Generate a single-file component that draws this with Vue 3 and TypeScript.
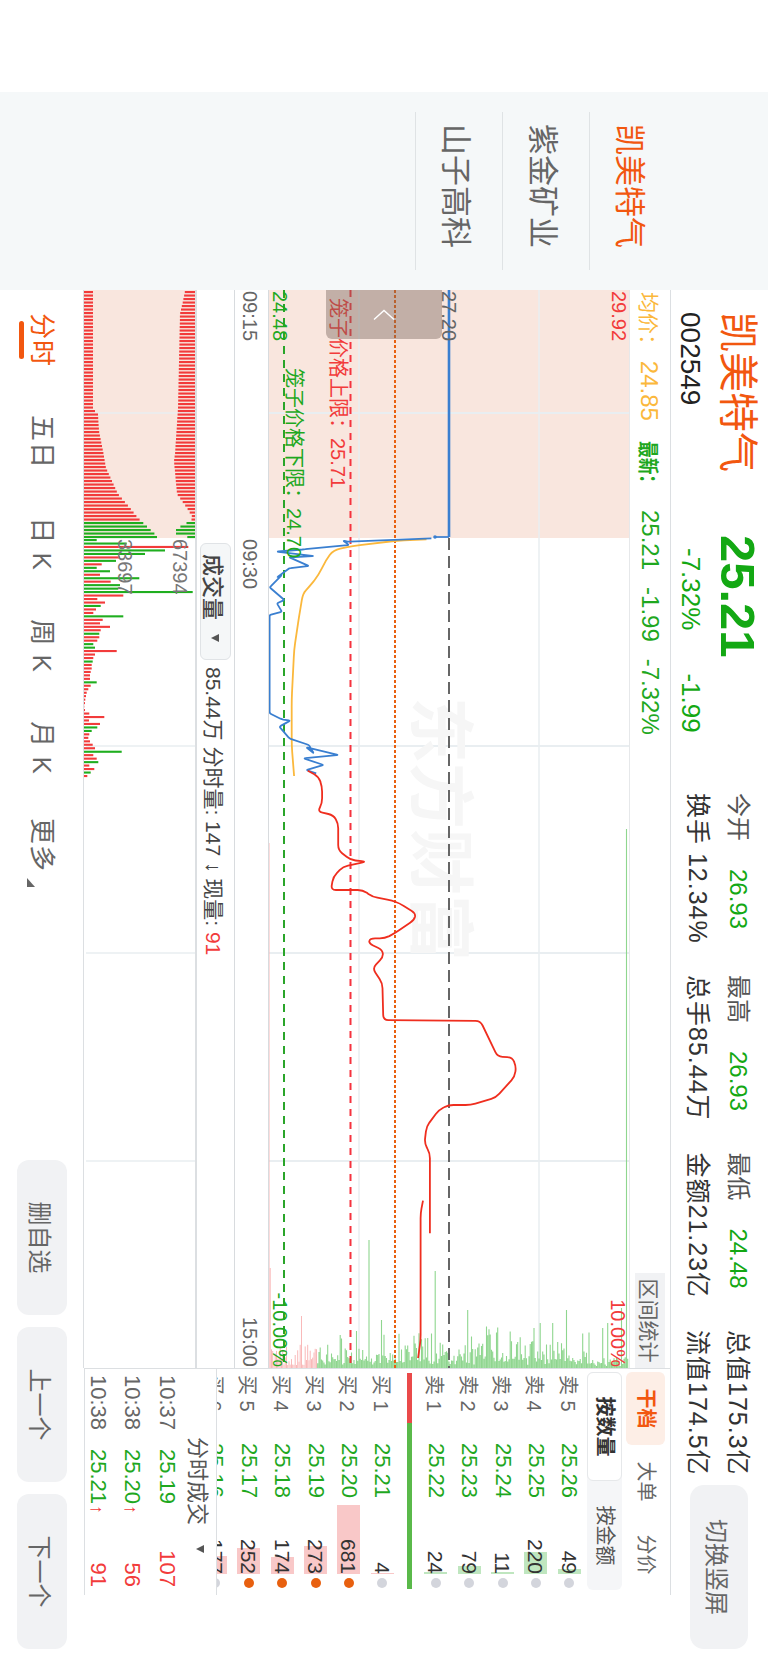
<script setup lang="ts">
type P = [number, number]
const CL = 290 // screen y of chart start
const CT = 629 // screen x of chart top
const toChart = (p: P): P => [p[1] - CL, CT - p[0]]
const z2 = (a: number[]): P[] => {
  const o: P[] = []
  for (let i = 0; i < a.length; i += 2) o.push([a[i] / 2.04, 500 + a[i + 1] / 3])
  return o
}
const z3 = (a: number[]): P[] => {
  const o: P[] = []
  for (let i = 0; i < a.length; i += 2) o.push([a[i] / 2.04, 860 + a[i + 1] / 3])
  return o
}
// polyline with softened corners
const rounded = (pts: P[], radius: number): string => {
  const c = pts.map(toChart)
  let d = `M${c[0][0].toFixed(1)} ${c[0][1].toFixed(1)}`
  for (let i = 1; i < c.length - 1; i++) {
    const [px, py] = c[i - 1]
    const [x, y] = c[i]
    const [nx, ny] = c[i + 1]
    const l1 = Math.hypot(x - px, y - py) || 1
    const l2 = Math.hypot(nx - x, ny - y) || 1
    const r1 = Math.min(radius, l1 / 2)
    const r2 = Math.min(radius, l2 / 2)
    const ax = x - ((x - px) / l1) * r1
    const ay = y - ((y - py) / l1) * r1
    const bx = x + ((nx - x) / l2) * r2
    const by = y + ((ny - y) / l2) * r2
    d += `L${ax.toFixed(1)} ${ay.toFixed(1)}Q${x.toFixed(1)} ${y.toFixed(1)} ${bx.toFixed(1)} ${by.toFixed(1)}`
  }
  const e = c[c.length - 1]
  return d + `L${e[0].toFixed(1)} ${e[1].toFixed(1)}`
}

const blue = rounded(z2([880, 115, 710, 125, 700, 122, 712, 135, 620, 148, 565, 155, 640, 168, 590, 172, 630, 198, 590, 205, 565, 232, 575, 225, 550, 262, 580, 300, 565, 310, 575, 335, 550, 345, 550, 500, 550, 640, 575, 658, 592, 662, 570, 680, 590, 715, 630, 735, 640, 760, 625, 742, 690, 765, 620, 775, 660, 795, 625, 810, 645, 820]), 1.5)
const avg = rounded(z2([870, 118, 810, 122, 720, 138, 680, 150, 665, 180, 650, 225, 630, 262, 618, 280, 610, 350, 600, 450, 595, 600, 595, 735, 600, 828]), 7)
const red = rounded([
  ...z2([628, 812, 650, 830, 657, 860, 657, 910, 648, 935, 680, 945, 690, 970, 690, 1050, 715, 1080]),
  ...z3([748, 5, 700, 20, 680, 50, 675, 90, 740, 90, 760, 110, 800, 122, 815, 130, 848, 160, 845, 180, 805, 220, 785, 235, 755, 235, 752, 250, 780, 270, 782, 290, 760, 325, 780, 370, 782, 480, 980, 483, 1015, 590, 1045, 592, 1053, 620, 1050, 650, 1012, 712, 960, 735, 915, 735, 895, 750, 870, 800, 866, 850, 877, 880, 877, 1120])
], 5)
const red2 = rounded([[863 / 2.04, 860 + 1022 / 3], [858 / 2.04, 860 + 1060 / 3], [858 / 2.04, 1340], [853 / 2.04, 1358]], 5)

// price-volume histogram, anchored at the right edge of the chart
let seed = 17
const rnd = () => {
  seed = (seed * 16807) % 2147483647
  return seed / 2147483647
}
const spikes: Record<number, number> = {
  269: 525, 270: 100, 302: 52, 336: 71, 326: 35, 356: 46, 369: 128, 382: 48,
  435: 97, 428: 30, 468: 58, 501: 105, 567: 58, 540: 45, 534: 40,
  553: 45, 546: 35, 603: 40, 608: 45, 626: 112, 627: 539, 622: 60
}
let greenD = ''
let pinkD = ''
for (let x = 269; x < 628; x += 1.25) {
  const r = rnd()
  const base = x < 317 ? 3 + r * r * 22 : x > 590 ? 1 + r * 10 : 3 + r * r * r * 32 + rnd() * 7
  const px = Math.round(x)
  const h = spikes[px] ?? base
  const seg = `M${(1078 - h).toFixed(1)} ${(CT - x).toFixed(1)}H1078`
  if (x < 317) pinkD += seg
  else greenD += seg
}

// volume bars
const lerp = (t: number[][], y: number) => {
  for (let i = 0; i < t.length - 1; i++) {
    if (y <= t[i + 1][0]) {
      const k = (y - t[i][0]) / (t[i + 1][0] - t[i][0])
      return t[i][1] + (t[i + 1][1] - t[i][1]) * k
    }
  }
  return t[t.length - 1][1]
}
const leftT = [[290, 9], [408, 9], [413, 14], [430, 15], [450, 19], [467, 22], [493, 34], [507, 46], [517, 54], [535, 73], [538, 73]]
const rightT = [[290, 10], [300, 12], [313, 15], [407, 17], [453, 20], [460, 21], [493, 18], [507, 8], [517, 2], [520, 5], [528, 19], [534, 19], [537, 2]]
const rgb = { R: '#f23b3b', G: '#1fae1f' }
const volBars: { x: number; y: number; w: number; c: string }[] = []
for (let y = 291; y < 538; y += 3.5) {
  const c = y < 519 ? rgb.R : rgb.G
  const l = lerp(leftT, y)
  const r = lerp(rightT, y)
  volBars.push({ x: y - CL, y: 111 - l, w: l, c })
  volBars.push({ x: y - CL, y: 0, w: r, c })
}
const rows = 'G50 G140 R325 G255 G195 R120 G108 R65 G50 G90 R60 G178 R92 G120 G115 G338 R130 R52 R75 G62 R48 R40 G130 R68 R60 R90 R62 G58 R58 R52 G40 G45 R110 R45 R40 G38 R35 R35 R32 R30 R30 G50 R32 R25 R20 R18 R16 R15 R13 R15 R28 R73 R27 R60 G52 G35 R28 R25 R30 R38 R45 G125 R40 R50 G55 R28 R43 G32 R22 R12'.split(' ')
rows.forEach((s, i) => {
  const y = 539 + i * 3.47
  const l = (Number(s.slice(1)) - 12) / 3
  volBars.push({ x: y - CL, y: 111 - l, w: l, c: s[0] === 'R' ? rgb.R : rgb.G })
})

const navItems = ['分时', '五日', '日 K', '周 K', '月 K', '更多']
const asks = [
  { l: '卖 5', p: '25.26', q: 49, w: 5 },
  { l: '卖 4', p: '25.25', q: 220, w: 22 },
  { l: '卖 3', p: '25.24', q: 11, w: 2 },
  { l: '卖 2', p: '25.23', q: 79, w: 8 },
  { l: '卖 1', p: '25.22', q: 24, w: 2 }
]
const bids = [
  { l: '买 1', p: '25.21', q: 4, w: 1, on: false },
  { l: '买 2', p: '25.20', q: 681, w: 69, on: true },
  { l: '买 3', p: '25.19', q: 273, w: 28, on: true },
  { l: '买 4', p: '25.18', q: 174, w: 17, on: true },
  { l: '买 5', p: '25.17', q: 252, w: 26, on: true },
  { l: '买 6', p: '25.16', q: 177, w: 18, on: false }
]
const trades = [
  { t: '10:37', p: '25.19', up: false, q: 107 },
  { t: '10:38', p: '25.20', up: true, q: 56 },
  { t: '10:38', p: '25.21', up: true, q: 91 }
]
</script>

<template>
  <div class="screen">
    <div class="stage">
      <div class="notch"></div>

      <aside class="side">
        <div class="side-item on"><span>凯美特气</span></div>
        <div class="side-item"><span>紫金矿业</span></div>
        <div class="side-item"><span>山子高科</span></div>
      </aside>

      <main class="main">
        <header class="head">
          <div class="name-block">
            <div class="name">凯美特气</div>
            <div class="code">002549</div>
          </div>
          <div class="price-block">
            <div class="price">25.21</div>
            <div class="change"><span>-7.32%</span><span>-1.99</span></div>
          </div>
          <div class="stat s1">
            <div class="stat-top"><span class="k">今开</span><span class="v">26.93</span></div>
            <div class="stat-sub">换手 12.34%</div>
          </div>
          <div class="stat s2">
            <div class="stat-top"><span class="k">最高</span><span class="v">26.93</span></div>
            <div class="stat-sub">总手85.44万</div>
          </div>
          <div class="stat s3">
            <div class="stat-top"><span class="k">最低</span><span class="v">24.48</span></div>
            <div class="stat-sub">金额21.23亿</div>
          </div>
          <div class="stat s4">
            <div class="stat-top plain">总值175.3亿</div>
            <div class="stat-sub">流值174.5亿</div>
          </div>
          <button class="switch">切换竖屏</button>
        </header>

        <section class="body">
          <div class="chart-col">
            <div class="legend">
              <span class="avg">均价： <span class="legend-num">24.85</span></span>
              <span class="last"><b>最新：</b><span class="legend-num">25.21</span><span class="legend-num">-1.99</span><span class="legend-num">-7.32%</span></span>
              <button class="range">区间统计</button>
            </div>

            <div class="chart">
              <svg class="plot" width="1078" height="360" viewBox="0 0 1078 360">
                <rect x="0" y="0" width="248" height="360" fill="#f9e6de" />
                <g stroke="#e9eef1" fill="none">
                  <path d="M0 90H1078M0 270H1078" stroke-width="1.5" />
                  <path d="M123 0V360M456 0V360M663 0V360M871 0V360" stroke-width="2" />
                </g>
                <text class="mark" x="407" y="212">东方财富</text>
                <path :d="pinkD" stroke="#f9b9b9" stroke-width="1" fill="none" />
                <path :d="greenD" stroke="#8fd68f" stroke-width="1.1" fill="none" />
                <path d="M248 180H1078" stroke="#666" stroke-width="2" stroke-dasharray="12 6" fill="none" />
                <path d="M0 234H1078" stroke="#e8600f" stroke-width="2" stroke-dasharray="3 2" fill="none" />
                <path d="M0 278.500H1078" stroke="#f5333f" stroke-width="2" stroke-dasharray="7 6" fill="none" />
                <path d="M0 345H1078" stroke="#2aa52a" stroke-width="2" stroke-dasharray="8 6" fill="none" />
                <path d="M0 180H247" stroke="#3a7fd0" stroke-width="2.600" fill="none" />
                <path d="M247 180V194" stroke="#3a7fd0" stroke-width="1.700" fill="none" />
                <circle cx="247" cy="194" r="1.800" fill="#3a7fd0" />
                <path :d="avg" fill="none" stroke="#fbb83c" stroke-width="1.800" stroke-linejoin="round" />
                <path :d="blue" fill="none" stroke="#3a7fd0" stroke-width="1.800" stroke-linejoin="round" />
                <path :d="red" fill="none" stroke="#ef2e1f" stroke-width="1.800" stroke-linejoin="round" />
                <path :d="red2" fill="none" stroke="#ef2e1f" stroke-width="1.800" stroke-linejoin="round" />
              </svg>
              <span class="lbl lbl-hi">29.92</span>
              <span class="lbl lbl-mid">27.20</span>
              <span class="lbl lbl-lo">24.48</span>
              <span class="lbl lbl-pct-up">10.00%</span>
              <span class="lbl lbl-pct-dn">-10.00%</span>
              <span class="lbl lbl-cage-up">笼子价格上限：25.71</span>
              <span class="lbl lbl-cage-dn">笼子价格下限：24.70</span>
              <div class="handle">
                <svg width="12" height="22" viewBox="0 0 12 22"><path d="M10.500 1L1.500 11L10.500 21" stroke="#fff" stroke-width="1.400" fill="none" /></svg>
              </div>
            </div>

            <div class="times"><span>09:15</span><span class="t2">09:30</span><span class="t3">15:00</span></div>

            <div class="vol-info">
              <button class="vol-btn">成交量<i class="tri"></i></button>
              <span class="vol-text">85.44万 分时量: 147 ↓ 现量: <em>91</em></span>
            </div>

            <div class="vol">
              <svg class="plot" width="1078" height="111" viewBox="0 0 1078 111">
                <rect x="0" y="0" width="248" height="111" fill="#f9e6de" />
                <path d="M123 0V111M456 0V109M663 0V109M871 0V109" stroke="#e9eef1" stroke-width="1.500" fill="none" />
                <rect v-for="(b, i) in volBars" :key="i" :x="b.x.toFixed(1)" :y="b.y.toFixed(1)" width="2.100" :height="b.w.toFixed(1)" :fill="b.c" />
              </svg>
              <span class="vol-lbl v1">67394</span>
              <span class="vol-lbl v2">33697</span>
            </div>
          </div>

          <div class="panel">
            <div class="tabs">
              <span class="tab on">干档</span><span class="tab">大单</span><span class="tab">分价</span>
            </div>
            <div class="seg"><span class="seg-on">按数量</span><span class="seg-off">按金额</span></div>
            <div class="book">
              <div v-for="r in asks" :key="r.l" class="row">
                <span class="r-l">{{ r.l }}</span><span class="r-p">{{ r.p }}</span>
                <span class="r-q"><i class="bar ask" :style="{ width: r.w + 'px' }"></i><span class="q-t">{{ r.q }}</span></span>
                <i class="dot"></i>
              </div>
              <div class="split"><div class="split-line"><i></i></div></div>
              <div v-for="r in bids" :key="r.l" class="row">
                <span class="r-l">{{ r.l }}</span><span class="r-p">{{ r.p }}</span>
                <span class="r-q"><i class="bar bid" :style="{ width: r.w + 'px' }"></i><span class="q-t">{{ r.q }}</span></span>
                <i class="dot" :class="{ hot: r.on }"></i>
              </div>
            </div>
            <div class="trades">
              <div class="tr-head">分时成交<i class="tri"></i></div>
              <div v-for="t in trades" :key="t.t + t.q" class="tr-row">
                <span class="tr-t">{{ t.t }}</span>
                <span class="tr-p">{{ t.p }}<em v-if="t.up">↑</em></span>
                <span class="tr-q">{{ t.q }}</span>
              </div>
            </div>
          </div>
        </section>

        <footer class="foot">
          <nav class="nav">
            <span v-for="(n, i) in navItems" :key="n" class="nav-item" :class="{ on: i === 0, more: n === '更多' }">{{ n }}<i v-if="n === '更多'" class="corner"></i></span>
          </nav>
          <div class="actions">
            <button class="act">删自选</button>
            <button class="act">上一个</button>
            <button class="act">下一个</button>
          </div>
        </footer>
      </main>
    </div>
  </div>
</template>

<style>
html, body { margin: 0; padding: 0; background: #fff; }
</style>

<style scoped>
.screen {
  width: 768px;
  height: 1663px;
  overflow: hidden;
  position: relative;
  font-family: "Liberation Sans", "Noto Sans CJK SC", sans-serif;
  color: #333;
  background: #fff;
}
.stage {
  position: absolute;
  left: 768px;
  top: 0;
  width: 1663px;
  height: 768px;
  display: flex;
  transform: rotate(90deg);
  transform-origin: 0 0;
}
button { font-family: inherit; border: 0; padding: 0; }
i { font-style: normal; display: block; }
em { font-style: normal; }
.notch { width: 92px; flex: none; }
.side {
  width: 198px;
  flex: none;
  background: #f5f8f9;
  padding-top: 92px;
  box-sizing: border-box;
}
.side-item {
  height: 87px;
  margin: 0 20px;
  padding-right: 10px;
  border-bottom: 1px solid #dfe3e5;
  display: flex;
  align-items: center;
  justify-content: center;
  font-size: 31px;
  color: #666;
  box-sizing: border-box;
}
.side-item.on { color: #f2570f; }
.main { width: 1373px; flex: none; display: flex; flex-direction: column; }
.head { height: 98px; display: flex; padding-left: 22px; position: relative; box-sizing: border-box; flex: none; }
.head::after { content: ""; position: absolute; left: 0; bottom: 0; width: 1305px; height: 1px; background: #dcdfe2; }
.name-block { width: 223px; flex: none; }
.name { font-size: 40px; line-height: 60px; color: #f2570f; }
.code { font-size: 28px; line-height: 36px; color: #222; }
.price-block { width: 258px; flex: none; }
.price { font-size: 49px; line-height: 60px; font-weight: 700; color: #13a813; }
.change { display: flex; gap: 43px; padding-left: 13px; font-size: 26px; line-height: 34px; color: #13a813; }
.stat { flex: none; font-size: 24px; color: #333; }
.s1 { width: 182px; }
.s2, .s3 { width: 177.500px; }
.s4 { width: 155px; }
.stat-top { height: 60px; line-height: 60px; }
.stat-top.plain, .stat-sub { font-size: 25px; letter-spacing: 1px; }
.stat-sub { line-height: 20px; }
.k { color: #555; }
.v { color: #13a813; margin-left: 28px; }
.switch {
  width: 164px;
  height: 58px;
  margin-top: 20px;
  border-radius: 14px;
  background: #f1f2f4;
  color: #666;
  font-size: 24px;
  flex: none;
}
.body { height: 586px; display: flex; flex: none; }
.chart-col { width: 1078px; flex: none; display: flex; flex-direction: column; }
.legend {
  height: 41px;
  display: flex;
  align-items: center;
  font-size: 21px;
  padding-left: 2px;
  box-sizing: border-box;
  border-bottom: 1px solid #e6e8ea;
}
.avg { color: #fbb83c; width: 149px; flex: none; }
.legend-num { font-size: 24px; }
.last { color: #1fa81f; display: flex; align-items: center; gap: 17px; }
.last b { font-size: 21px; font-weight: 700; width: 52px; white-space: nowrap; transform: scaleX(0.8); transform-origin: 0 50%; }
.range {
  margin-left: auto;
  width: 95px;
  height: 30px;
  background: #f1f2f4;
  color: #666;
  font-size: 21px;
  white-space: nowrap;
}
.chart { height: 360px; position: relative; flex: none; }
.plot { display: block; }
.mark { font-size: 66px; font-weight: 700; fill: #f6f6f6; }
.lbl { position: absolute; font-size: 20px; line-height: 24px; white-space: nowrap; transform: translateY(-50%); }
.lbl-hi { left: 1px; top: 10px; color: #f23b3b; }
.lbl-mid { left: 1px; top: 180px; color: #666; }
.lbl-lo { left: 1px; top: 349px; color: #1fa81f; }
.lbl-pct-up { right: 1px; top: 11px; color: #f23b3b; }
.lbl-pct-dn { right: 1px; top: 349px; color: #1fa81f; }
.lbl-cage-up { left: 8px; top: 291px; color: #f23b3b; }
.lbl-cage-dn { left: 78px; top: 335px; color: #1fa81f; }
.handle {
  position: absolute;
  left: 0;
  top: 187px;
  width: 49px;
  height: 116px;
  background: rgba(120, 100, 90, 0.42);
  border-radius: 0 6px 6px 0;
  display: flex;
  align-items: center;
  justify-content: center;
}
.times {
  height: 35px;
  flex: none;
  display: flex;
  align-items: center;
  font-size: 20px;
  color: #666;
  border-top: 1px solid #d8dbde;
  border-bottom: 1px solid #d8dbde;
  box-sizing: border-box;
  padding: 3px 1px 0;
}
.t2 { margin-left: 198px; }
.t3 { margin-left: auto; }
.vol-info {
  height: 39px;
  flex: none;
  display: flex;
  align-items: center;
  border-bottom: 2px solid #dcdfe2;
  box-sizing: border-box;
}
.vol-btn {
  margin-left: 253px;
  width: 117px;
  height: 31px;
  background: #f5f7f8;
  border: 1px solid #e0e3e6;
  border-radius: 6px;
  color: #444;
  font-size: 22px;
  font-weight: 500;
  display: flex;
  align-items: center;
  padding-left: 10px;
  box-sizing: border-box;
  flex: none;
}
.tri {
  width: 0;
  height: 0;
  border-left: 4.500px solid transparent;
  border-right: 4.500px solid transparent;
  border-top: 8px solid #555;
  margin-left: 14px;
}
.vol-text { margin-left: 7px; font-size: 21px; color: #444; white-space: nowrap; }
.vol-text em { color: #f23b3b; }
.vol { height: 111px; flex: none; position: relative; border-bottom: 1px solid #dcdfe2; box-sizing: content-box; margin-bottom: -1px; }
.vol-lbl { position: absolute; font-size: 20px; line-height: 22px; color: #777; left: 249px; }
.v1 { top: 4px; }
.v2 { top: 59px; }
.panel {
  width: 227px;
  flex: none;
  border-left: 1px solid #dcdfe2;
  box-sizing: border-box;
  display: flex;
  flex-direction: column;
  border-bottom: 1px solid #dcdfe2;
}
.tabs { display: flex; margin: 5px 0 0 3px; height: 39px; flex: none; }
.tab { width: 73px; text-align: center; line-height: 39px; font-size: 20px; color: #666; }
.tab.on { background: #fdeee6; color: #f2570f; font-weight: 700; border-radius: 6px; }
.seg { margin: 4px 0 0 3px; width: 218px; height: 35px; display: flex; background: #f5f6f8; border-radius: 6px; flex: none; }
.seg span { width: 109px; text-align: center; line-height: 35px; font-size: 20px; color: #555; }
.seg .seg-on { background: #fff; border: 1px solid #e6e8ea; box-sizing: border-box; border-radius: 6px; font-weight: 700; color: #333; line-height: 33px; }
.book { height: 369px; margin-top: 1px; overflow: hidden; flex: none; }
.row { height: 33.400px; display: flex; align-items: center; padding: 0 7px 0 6px; box-sizing: border-box; }
.r-l { width: 68px; flex: none; font-size: 20px; color: #666; white-space: nowrap; }
.r-p { font-size: 22px; color: #1fa81f; flex: none; }
.r-q { margin-left: auto; position: relative; width: 75px; height: 23px; text-align: right; font-size: 21px; line-height: 23px; color: #333; }
.q-t { position: relative; }
.bar { position: absolute; right: 0; top: 0; height: 23px; }
.bar.ask { background: #bfe6bf; }
.bar.bid { background: #f9c8c8; }
.dot { width: 10px; height: 10px; border-radius: 50%; background: #d3d5dc; margin-left: 4px; flex: none; }
.dot.hot { background: #e8600f; }
.split { height: 20px; display: flex; align-items: center; padding: 0 6px 0 4px; }
.split-line { width: 216px; height: 5px; background: #5ab94a; }
.split-line i { width: 50px; height: 5px; background: #ea4a4a; }
.trades { height: 133px; flex: none; border-top: 1px solid #dcdfe2; box-sizing: border-box; }
.tr-head { height: 32px; display: flex; align-items: center; padding-left: 68px; font-size: 22px; color: #555; }
.tr-head .tri { margin-left: 20px; }
.tr-row { height: 34.500px; display: flex; align-items: center; padding: 0 8px 0 6px; font-size: 22px; }
.tr-t { width: 74px; color: #666; flex: none; }
.tr-p { color: #1fa81f; }
.tr-p em { color: #f23b3b; font-size: 18px; margin-left: 1px; }
.tr-q { margin-left: auto; color: #f23b3b; }
.foot { height: 84px; flex: none; display: flex; align-items: center; }
.nav { display: flex; flex: none; margin-left: -1px; }
.nav-item { width: 102px; text-align: center; font-size: 26px; color: #666; position: relative; letter-spacing: 1px; line-height: 30px; }
.nav-item.on { color: #f2570f; }
.nav-item.on::after { content: ""; position: absolute; left: 32px; top: 33px; width: 38px; height: 5px; border-radius: 3px; background: #f2570f; }
.nav-item.more { margin-left: -5px; }
.corner { position: absolute; left: 84px; top: 22px; width: 9px; height: 8px; background: #666; clip-path: polygon(0 100%, 100% 0, 100% 100%); }
.actions { margin-left: auto; display: flex; gap: 12px; padding-right: 14px; }
.act { width: 155px; height: 50px; border-radius: 12px; background: #f1f2f4; color: #666; font-size: 24px; }
</style>
